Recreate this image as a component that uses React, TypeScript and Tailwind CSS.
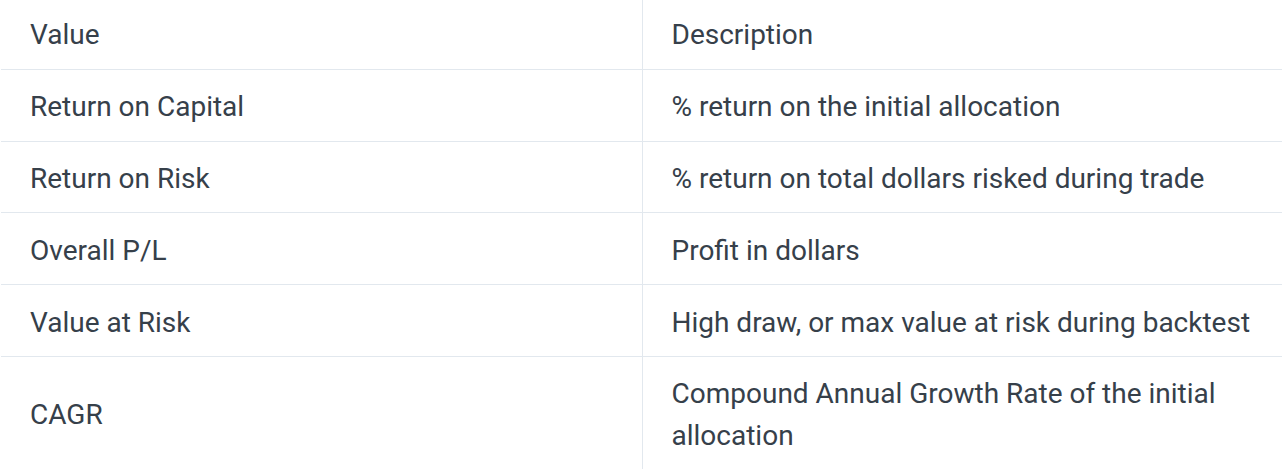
const rows = [
  { value: "Return on Capital", desc: "% return on the initial allocation" },
  { value: "Return on Risk", desc: "% return on total dollars risked during trade" },
  { value: "Overall P/L", desc: "Profit in dollars" },
  { value: "Value at Risk", desc: "High draw, or max value at risk during backtest" },
  { value: "CAGR", desc: "Compound Annual Growth Rate of the initial allocation" },
];

export default function App() {
  return (
    <div className="bg-white w-[1284px] h-[469px] overflow-hidden pl-px">
      <table
        className="-mt-[2px] w-[1281px] border-collapse table-fixed text-[28px] leading-[42px] text-[#36404a]"
        style={{ fontFamily: "Roboto, 'Liberation Sans', sans-serif" }}
      >
        <colgroup>
          <col className="w-[641px]" />
          <col className="w-[640px]" />
        </colgroup>
        <thead>
          <tr className="border-b border-[#e2e8ee]">
            <th className="text-left font-normal px-[29px] pt-[16.4px] pb-[12.4px]">Value</th>
            <th className="text-left font-normal pl-[29px] pr-4 pt-[16.4px] pb-[12.4px] border-l border-[#e2e8ee]">
              Description
            </th>
          </tr>
        </thead>
        <tbody>
          {rows.map((r, i) => (
            <tr
              key={r.value}
              className={i < rows.length - 1 ? "border-b border-[#e2e8ee]" : ""}
            >
              <td className="px-[29px] pt-[16.4px] pb-[12.4px] align-middle">{r.value}</td>
              <td className="pl-[29px] pr-4 pt-[16.4px] pb-[12.4px] border-l border-[#e2e8ee] align-middle">
                {r.desc}
              </td>
            </tr>
          ))}
        </tbody>
      </table>
    </div>
  );
}
